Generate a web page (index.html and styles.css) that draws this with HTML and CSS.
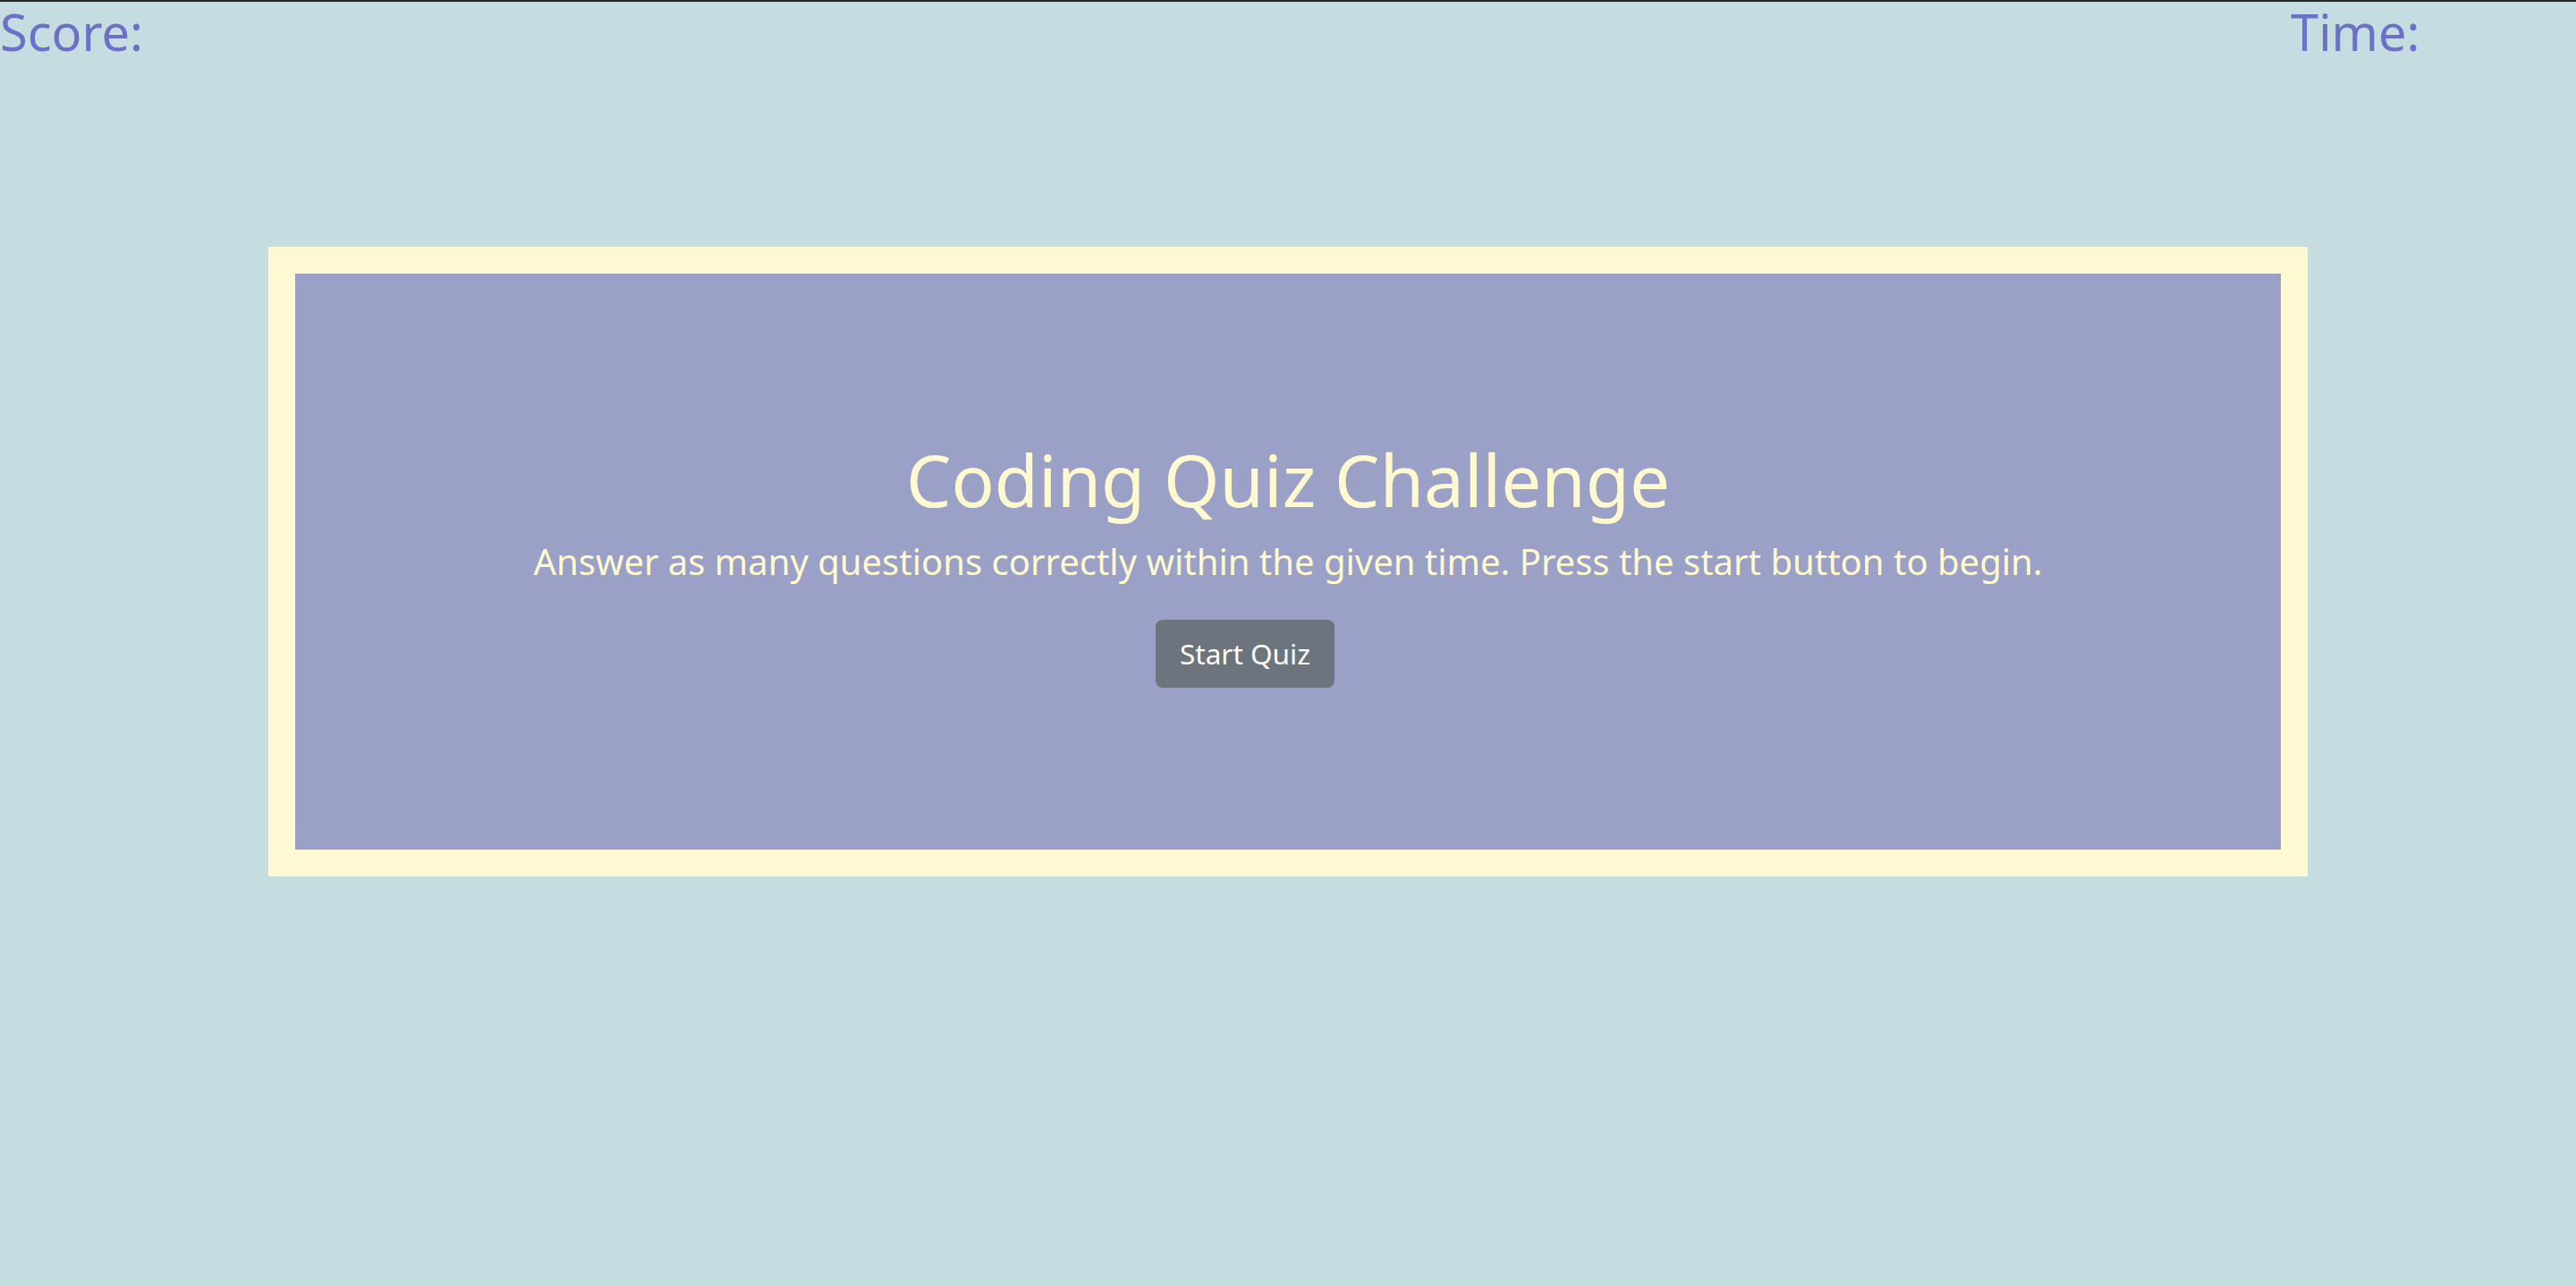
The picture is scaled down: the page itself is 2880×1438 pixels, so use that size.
FILE: index.html
```html
<!DOCTYPE html>
<html lang="en">
<head>
<meta charset="utf-8">
<title>Coding Quiz Challenge</title>
<link rel="stylesheet" href="styles.css">
</head>
<body>
<header class="topbar">
  <div class="score">Score:</div>
  <div class="time">Time:</div>
</header>
<main class="frame">
  <section class="panel">
    <h1 class="title">Coding Quiz Challenge</h1>
    <p class="lead">Answer as many questions correctly within the given time. Press the start button to begin.</p>
    <button class="start-btn" type="button">Start Quiz</button>
  </section>
</main>
</body>
</html>
```

FILE: styles.css
```css
html, body {
  margin: 0;
  padding: 0;
}
body {
  background: #c5dce0;
  font-family: "Noto Sans", "Open Sans", sans-serif;
  border-top: 2px solid #262626;
  min-height: 1436px;
}
.topbar {
  display: flex;
  height: 66px;
  font-size: 56px;
  line-height: 66px;
  color: #6c70c6;
}
.score {
  flex: 1;
}
.time {
  width: 319px;
}
.frame {
  width: 2280px;
  box-sizing: border-box;
  margin: 208px auto 0;
  border: 30px solid #fff9d3;
  background: #9aa0c6;
}
.panel {
  height: 644px;
  display: flex;
  flex-direction: column;
  align-items: center;
  justify-content: center;
  color: #fff9cf;
  text-align: center;
}
.title {
  margin: 0 0 14px;
  font-size: 80px;
  font-weight: 400;
  line-height: 96px;
}
.lead {
  margin: 0 0 35px;
  font-size: 40px;
  line-height: 60px;
}
.start-btn {
  margin-right: 96px;
  box-sizing: border-box;
  width: 200px;
  height: 76px;
  white-space: nowrap;
  border: 2px solid #6c757d;
  border-radius: 8px;
  background: #6c757d;
  color: #ffffff;
  font-family: "Noto Sans", "Open Sans", sans-serif;
  font-size: 31.5px;
  line-height: 48px;
  padding: 12px 0;
}
```
